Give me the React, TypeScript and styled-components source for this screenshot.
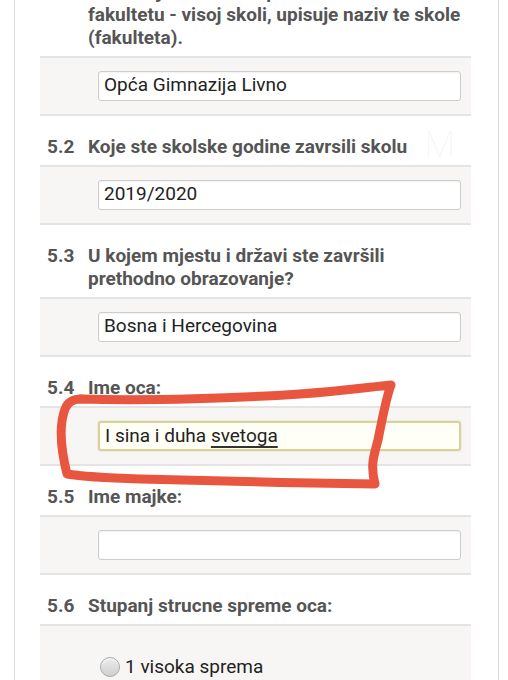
import React from "react";
import styled, { createGlobalStyle } from "styled-components";

const GlobalStyle = createGlobalStyle`
  html, body { margin: 0; padding: 0; background: #ffffff; }
  body { font-family: Roboto, "Liberation Sans", Arial, sans-serif; }
`;

const Page = styled.div`
  position: relative;
  width: 508px;
  height: 680px;
  overflow: hidden;
  background: #ffffff;
`;

const Card = styled.div`
  margin: -39px 9px 0 14px;
  border-left: 1.5px solid #dcdcdc;
  border-right: 1.5px solid #dcdcdc;
  background: #ffffff;
  min-height: 800px;
`;

const Section = styled.section`
  display: flex;
  flex-direction: column;
`;

const Question = styled.div`
  display: flex;
  padding: 19px 36px 7px 32px;
  font-size: 19px;
  font-weight: 700;
  line-height: 23px;
  color: #555555;
`;

const Num = styled.span`
  flex: 0 0 41px;
`;

const QText = styled.span<{ $lines?: boolean }>`
  flex: 1;
  white-space: ${(p) => (p.$lines ? "nowrap" : "normal")};
`;

const AnswerBox = styled.div<{ $tall?: boolean }>`
  margin: 0 27px 0 25px;
  background: #f8f6f5;
  border-top: 2px solid #e4e4e4;
  border-bottom: 2px solid #e4e4e4;
  padding: ${(p) => (p.$tall ? "29px 10px 20px 60px" : "13px 10px 13px 58px")};
`;

const Field = styled.div<{ $focused?: boolean }>`
  box-sizing: border-box;
  height: 30px;
  line-height: 26px;
  padding: 0 5px;
  background: ${(p) => (p.$focused ? "#fffff8" : "#ffffff")};
  border: ${(p) => (p.$focused ? "2px solid #d9d19a" : "1.5px solid #cdcdcd")};
  border-radius: 3px;
  box-shadow: ${(p) =>
    p.$focused ? "0 0 2px rgba(200, 190, 120, 0.5)" : "inset 0 1px 2px rgba(0,0,0,0.06)"};
  font-size: 19px;
  color: #222222;
  white-space: nowrap;
  overflow: hidden;
`;

const Spell = styled.span`
  text-decoration: underline;
  text-decoration-color: #333333;
  text-decoration-thickness: 1.5px;
  text-underline-offset: 4px;
`;

const RadioRow = styled.label`
  display: flex;
  align-items: center;
  gap: 5px;
  font-size: 19px;
  color: #222222;
`;

const RadioDot = styled.span`
  flex: 0 0 20px;
  width: 20px;
  height: 20px;
  border-radius: 50%;
  box-sizing: border-box;
  border: 1px solid #a9a9a9;
  background: linear-gradient(180deg, #ececec 0%, #d0d0d0 100%);
  box-shadow: inset 0 1px 1px rgba(255,255,255,0.8);
`;

const Watermark = styled.div`
  position: absolute;
  left: 424px;
  top: 124px;
  font-size: 36px;
  font-weight: 300;
  color: rgba(0, 0, 0, 0.035);
  font-family: Roboto, sans-serif;
`;

const Annotation = styled.svg`
  position: absolute;
  left: 0;
  top: 0;
  pointer-events: none;
`;

type Item = {
  num: string;
  text: React.ReactNode;
  answer: React.ReactNode;
  focused?: boolean;
  lines?: boolean;
};

const items: Item[] = [
  {
    num: "",
    lines: true,
    text: (
      <>
        Ukoliko je kandidat upisan na višu ili visoku
        <br />
        fakultetu - visoj skoli, upisuje naziv te skole
        <br />
        (fakulteta).
      </>
    ),
    answer: "Opća Gimnazija Livno",
  },
  { num: "5.2", text: "Koje ste skolske godine zavrsili skolu", answer: "2019/2020" },
  {
    num: "5.3",
    text: "U kojem mjestu i državi ste završili prethodno obrazovanje?",
    answer: "Bosna i Hercegovina",
  },
  {
    num: "5.4",
    text: "Ime oca:",
    answer: (
      <span>
        I sina i duha <Spell>svetoga</Spell>
      </span>
    ),
    focused: true,
  },
  { num: "5.5", text: "Ime majke:", answer: "" },
];

export default function App() {
  return (
    <>
      <GlobalStyle />
      <Page>
        <Card>
          {items.map((it, i) => (
            <Section key={i}>
              <Question>
                <Num>{it.num}</Num>
                <QText $lines={it.lines}>{it.text}</QText>
              </Question>
              <AnswerBox>
                <Field $focused={it.focused}>{it.answer}</Field>
              </AnswerBox>
            </Section>
          ))}
          <Section>
            <Question>
              <Num>5.6</Num>
              <QText>Stupanj strucne spreme oca:</QText>
            </Question>
            <AnswerBox $tall>
              <RadioRow>
                <RadioDot />
                1 visoka sprema
              </RadioRow>
            </AnswerBox>
          </Section>
        </Card>
        <Watermark>M</Watermark>
        <Annotation width="508" height="680" viewBox="0 0 508 680">
          <path
            d="M 80 399 C 150 401 240 398 300 394 C 340 391 370 387 391 385 C 386 398 382 420 378 440 C 374 455 370 465 375 484 C 300 483 200 481 140 479 C 110 478 85 477 67 474 C 61 450 59 425 65 409 C 68 401 74 399 82 399"
            fill="none"
            stroke="#e8563f"
            strokeWidth="9"
            strokeLinecap="round"
            strokeLinejoin="round"
          />
        </Annotation>
      </Page>
    </>
  );
}
